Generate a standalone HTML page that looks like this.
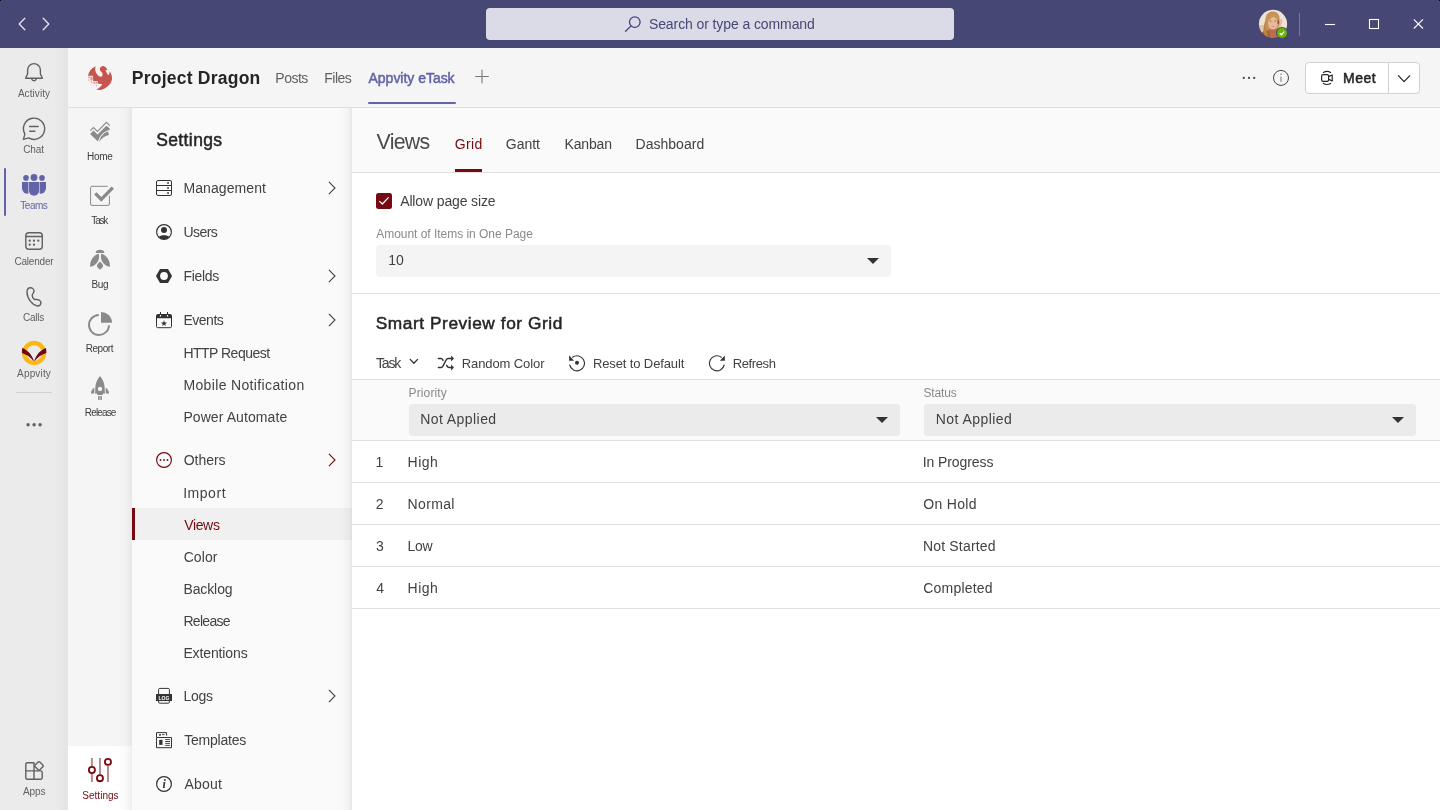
<!DOCTYPE html>
<html lang="en">
<head>
<meta charset="utf-8">
<title>Project Dragon - Appvity eTask - Settings - Views</title>
<style>
html,body{margin:0;padding:0;}
body{width:1440px;height:810px;overflow:hidden;position:relative;background:#fff;font-family:"Liberation Sans",sans-serif;}
.a{position:absolute;}
.t{position:absolute;white-space:nowrap;line-height:1;}
svg{position:absolute;overflow:visible;}
#titlebar{left:0;top:0;width:1440px;height:48px;background:#464775;}
#search{left:486px;top:8px;width:468px;height:32px;border-radius:4px;background:#dbdbe7;}
#rail{left:0;top:48px;width:68px;height:762px;background:linear-gradient(90deg,#ebebeb 0,#ebebeb 54px,#e4e4e4 68px);}
#header{left:68px;top:48px;width:1372px;height:59px;background:#f5f5f5;border-bottom:1px solid #dedede;}
#appnav{left:68px;top:108px;width:64px;height:702px;background:linear-gradient(90deg,#f5f5f5 0,#f5f5f5 50px,#f2f2f2 57px,#ececec 62px,#e5e5e5 64px);}
#appnav-active{left:68px;top:746px;width:64px;height:64px;background:linear-gradient(90deg,#fff 0,#fff 50px,#fbfbfb 57px,#f4f4f4 62px,#ececec 64px);}
#panel{left:132px;top:108px;width:220px;height:702px;background:linear-gradient(90deg,#fafafa 0,#fafafa 205px,#f7f7f7 212px,#f1f1f1 217px,#e7e7e7 220px);}
#hl{left:132px;top:508px;width:220px;height:32px;background:linear-gradient(90deg,#f0f0f0 0,#f0f0f0 205px,#ededed 212px,#e8e8e8 217px,#dfdfdf 220px);}
#hlbar{left:132px;top:508px;width:3px;height:32px;background:#750b12;}
#content{left:352px;top:108px;width:1088px;height:702px;background:#fff;}
#viewsbar{left:352px;top:108px;width:1088px;height:64px;background:#fafafa;border-bottom:1px solid #e0e0e0;}
.hr{height:1px;background:#e0e0e0;left:352px;width:1088px;}
.dd{border-radius:4px;height:32px;}
.tri{width:0;height:0;border-left:6px solid transparent;border-right:6px solid transparent;border-top:6.5px solid #333;}
</style>
</head>
<body>
<div id="titlebar" class="a"></div>
<div id="search" class="a"></div>
<div class="a" style="left:0;top:0;width:1px;height:1px;background:#000;"></div><div class="a" style="left:1439px;top:0;width:1px;height:1px;background:#000;"></div>
<div id="rail" class="a"></div>
<div id="header" class="a"></div>
<div id="appnav" class="a"></div>
<div id="appnav-active" class="a"></div>
<div id="panel" class="a"></div>
<div id="hl" class="a"></div>
<div id="hlbar" class="a"></div>
<div id="content" class="a"></div>
<div id="viewsbar" class="a"></div>

<!-- rail active marker + divider -->
<div class="a" style="left:4px;top:168px;width:2px;height:48px;background:#6264a7;border-radius:1px;"></div>
<div class="a" style="left:16px;top:392px;width:36px;height:1px;background:#d1d1d1;"></div>

<!-- header tab underline -->
<div class="a" style="left:368px;top:102px;width:88px;height:2px;background:#6264a7;border-radius:1px;"></div>
<!-- Meet button -->
<div class="a" style="left:1305px;top:62px;width:113px;height:30px;background:#fff;border:1px solid #d1d1d1;border-radius:4px;"></div>
<div class="a" style="left:1388px;top:63px;width:1px;height:30px;background:#d1d1d1;"></div>

<!-- content: Grid tab underline -->
<div class="a" style="left:455px;top:169px;width:27px;height:3px;background:#750b12;"></div>
<!-- checkbox -->
<div class="a" style="left:376px;top:193px;width:16px;height:16px;background:#750b12;border-radius:2.5px;"></div>
<svg style="left:376px;top:193px" width="16" height="16" viewBox="0 0 16 16"><path d="M3.4 8.1 L6.3 11 L12.6 4.4" fill="none" stroke="#fff" stroke-width="1.3"/></svg>
<!-- page size dropdown -->
<div class="a dd" style="left:376px;top:245px;width:515px;background:#f4f4f4;"></div>
<div class="a tri" style="left:867px;top:258px;"></div>
<div class="a hr" style="top:293px;"></div>
<!-- toolbar bottom, table header -->
<div class="a hr" style="top:379px;"></div>
<div class="a" style="left:352px;top:380px;width:1088px;height:60px;background:#fafafa;"></div>
<div class="a dd" style="left:409px;top:404px;width:491px;background:#ebebeb;"></div>
<div class="a tri" style="left:876px;top:417px;"></div>
<div class="a dd" style="left:924px;top:404px;width:492px;background:#ebebeb;"></div>
<div class="a tri" style="left:1392px;top:417px;"></div>
<div class="a hr" style="top:440px;"></div>
<div class="a hr" style="top:482px;"></div>
<div class="a hr" style="top:524px;"></div>
<div class="a hr" style="top:566px;"></div>
<div class="a hr" style="top:608px;"></div>

<div id="fg" class="a" style="left:0;top:0;width:1440px;height:810px;will-change:transform;">
<!--ICONS-START-->
<svg style="left:0;top:0" width="1440" height="810" viewBox="0 0 1440 810" fill="none">
<defs>
<clipPath id="avc"><circle cx="1273" cy="23.9" r="14.1"/></clipPath>
<filter id="avb" x="-10%" y="-10%" width="120%" height="120%"><feGaussianBlur stdDeviation="0.55"/></filter>
<clipPath id="lgc"><circle cx="100" cy="77.8" r="12.3"/></clipPath>
</defs>

<!-- ===== title bar ===== -->
<g stroke="#e4e4ee" stroke-width="1.3" stroke-linecap="round" stroke-linejoin="round">
<path d="M24.8 18.3 L19.2 24 L24.8 29.7"/>
<path d="M43.2 18.3 L48.8 24 L43.2 29.7"/>
</g>
<!-- search icon -->
<g stroke="#40417a" stroke-width="1.3" stroke-linecap="round">
<circle cx="634.8" cy="22.1" r="5.3"/>
<path d="M630.8 26.1 L625.6 31.2"/>
</g>
<!-- avatar -->
<g clip-path="url(#avc)"><g filter="url(#avb)">
<rect x="1256" y="7" width="34" height="34" fill="#eee4d6"/>
<rect x="1256" y="25" width="12" height="16" fill="#dbc9ab"/>
<rect x="1279" y="27" width="10" height="6" fill="#e2d3bd"/>
<path d="M1264 39 C1262 32 1264 25 1265.3 20 C1265.8 13.5 1269.5 11.3 1273 11.6 C1277.5 11.8 1280 15 1279.6 20 L1279.4 26 L1277 32 L1276 39 Z" fill="#c79256"/>
<path d="M1260.5 34 C1263 31 1266 30 1269 30.5 L1271.5 29 L1276.5 29.2 L1277 39 L1262 39 Z" fill="#a95c3b"/>
<path d="M1269.2 29 L1276.6 29 L1276.8 38.5 L1270 38.5 Z" fill="#b96e4e"/>
<ellipse cx="1273" cy="23.2" rx="4.9" ry="6.4" fill="#e8b999"/>
<path d="M1267.8 20.5 C1268.5 15 1272.5 13 1276 14.8 C1278 16 1278.8 18.5 1279 22 C1277 19.5 1275.3 17.5 1274 16 C1272 18 1270 19.5 1267.8 20.5 Z" fill="#c99558"/>
<path d="M1266.2 20 C1265.2 26 1266.2 31 1268.4 37 L1265 37 C1263 31 1264 24.5 1266.2 20 Z" fill="#bf8345"/>
<path d="M1279.6 19.5 C1281.2 18 1283 19.5 1282.2 22.5 L1280.4 28 L1278.6 27.4 Z" fill="#e6bba8"/>
<ellipse cx="1278.4" cy="22.3" rx=".9" ry="2.3" fill="#8d4f2e"/>
<rect x="1269.6" y="20.6" width="1.8" height=".9" fill="#8c6a58"/><rect x="1274.4" y="20.6" width="1.8" height=".9" fill="#8c6a58"/>
<rect x="1271.3" y="26" width="3.4" height="1" fill="#d9968a"/>
</g></g>
<circle cx="1282" cy="33" r="6" fill="#464775"/>
<circle cx="1282" cy="33" r="5" fill="#6bb700"/>
<path d="M1279.8 33.2 L1281.4 34.8 L1284.3 31.6" stroke="#fff" stroke-width="1.3"/>
<rect x="1299" y="13" width="1" height="23" fill="#7677a0"/>
<!-- window controls -->
<g stroke="#fff" stroke-width="1.1">
<path d="M1325 24.5 H1335"/>
<rect x="1369.5" y="19.5" width="9" height="9"/>
<path d="M1413.8 19.3 L1423 28.5 M1423 19.3 L1413.8 28.5"/>
</g>

<!-- ===== left rail ===== -->
<g stroke="#616161" stroke-width="1.4" stroke-linejoin="round" stroke-linecap="round">
<!-- bell -->
<path d="M27.6 70 A6.4 6.4 0 0 1 40.4 70 V74 L42.4 78.2 H25.6 L27.6 74 Z"/>
<path d="M31.6 78.9 A2.5 2.5 0 0 0 36.4 78.9"/>
<!-- chat -->
<path d="M24.9 134.1 A10.6 10.6 0 1 1 28.7 137.9 L23.4 139.4 Z"/>
<path d="M29.7 126.5 H38.2 M29.7 131.3 H34.9"/>
<!-- calendar -->
<rect x="25.8" y="232.7" width="16.5" height="16.5" rx="3"/>
<path d="M25.8 236.5 H42.3"/>
<!-- calls -->
<path d="M27 292 C27 289.5 28.5 287.8 30.6 287.8 C32.5 287.8 34 289.5 34 291.3 C34 293 32.2 293.8 32.2 295.2 C32.2 297 33 298.6 34.3 299.3 C35.5 299.9 36.5 299.2 38 299.6 C39.8 300.2 41 301.6 40.9 303 C40.8 304.8 39.2 306 37.4 306 C33 305.5 27 299 27 292 Z"/>
<!-- apps -->
<path d="M27.3 762.8 H34 V779.2 H27.3 A1.5 1.5 0 0 1 25.8 777.7 V764.3 A1.5 1.5 0 0 1 27.3 762.8 Z"/>
<path d="M25.8 770.9 H40.7 A1.5 1.5 0 0 1 42.2 772.4 V777.7 A1.5 1.5 0 0 1 40.7 779.2 H34"/>
<rect x="-3.3" y="-3.3" width="6.6" height="6.6" rx="1.2" transform="translate(39 765.9) rotate(45)"/>
</g>
<g fill="#616161">
<circle cx="29.7" cy="240.7" r="1.15"/><circle cx="34" cy="240.7" r="1.15"/><circle cx="38.3" cy="240.7" r="1.15"/>
<circle cx="29.7" cy="244.7" r="1.15"/><circle cx="34" cy="244.7" r="1.15"/>
<circle cx="28.1" cy="424.8" r="1.7"/><circle cx="34.1" cy="424.8" r="1.7"/><circle cx="40.1" cy="424.8" r="1.7"/>
</g>
<!-- teams -->
<g fill="#6264a7">
<circle cx="34" cy="177.5" r="3.4"/><circle cx="26" cy="177.9" r="2.8"/><circle cx="42" cy="177.9" r="2.8"/>
<path d="M29 182 H39 V190.8 A5 5 0 0 1 29 190.8 Z"/>
<path d="M22 182 H28 V193.8 A6 5.6 0 0 1 22 188.2 Z"/>
<path d="M40 182 H46 V188.2 A6 5.6 0 0 1 40 193.8 Z"/>
<rect x="28" y="182" width="1" height="11.5" fill="#b0b1d6"/><rect x="39" y="182" width="1" height="11.5" fill="#b0b1d6"/>
</g>
<!-- appvity -->
<circle cx="34.1" cy="353" r="9.9" stroke="#fdb714" stroke-width="4.5"/>
<g fill="#6e0914">
<path d="M22.3 348.1 C27.5 350.2 31.5 354 33.9 360.8 L33.3 360.8 C30.8 357.5 27 354.6 21.9 353 C21.8 351.3 22 349.5 22.3 348.1 Z"/>
<path d="M45.9 348.1 C40.7 350.2 36.7 354 34.3 360.8 L34.9 360.8 C37.4 357.5 41.2 354.6 46.3 353 C46.4 351.3 46.2 349.5 45.9 348.1 Z"/>
</g>

<!-- ===== header ===== -->
<!-- logo -->
<g clip-path="url(#lgc)">
<circle cx="100" cy="77.8" r="12.3" fill="#f8f1f0"/>
<path fill="#c6544f" transform="translate(84 62)" d="M11.9 4 C10.6 6.5 11 9.5 13 12.3 C14.2 14 15.6 14.9 16.8 14.8 C18.3 14.6 19 13.2 18.5 11.5 C18 10 16.6 9.5 16.2 8.5 C15.6 7 15.8 5.8 16.8 5 C17.8 4.1 19.6 3.6 21 4.4 C22.4 5.2 22.6 6.8 23.6 8.3 L21.4 8 C21.8 9.2 22.3 10.3 23 11.3 C23.6 12.2 24.2 13 24.7 13.2 C25.3 12 25.6 10.8 25.7 9.5 C27.4 11.5 28.2 14 28 17 C27.7 20 26 23 22.1 25.5 C20 26.9 18 27.7 16 27.9 C14.5 28 13 27.8 11.9 27.3 C13.5 27 15 26.2 16.2 25 C17.2 24 17.9 23 18.2 22 L13.8 21.7 V19 H9.1 V13.8 H4 C4.2 11.8 4.8 10.4 5.6 9.2 C7.2 6.6 9.4 4.8 11.9 4 Z"/>
<g fill="#c6544f" transform="translate(84 62)" opacity=".55">
<rect x="4.2" y="14.6" width="1.6" height="1.6"/><rect x="6.4" y="14.6" width="2.2" height="3.4"/><rect x="4.2" y="17.4" width="1" height="1.4"/>
<rect x="6.4" y="18.6" width="1.6" height="1"/><rect x="9.4" y="19.6" width="1.6" height="2"/><rect x="11.4" y="19.6" width="2" height="2"/>
<rect x="7.4" y="20.2" width="1.2" height="1"/><rect x="12" y="23" width="1" height="1"/>
</g>
</g>
<!-- plus -->
<path d="M475.2 76.5 H488.8 M482 69.7 V83.3" stroke="#767676" stroke-width="1.1"/>
<!-- more dots, info -->
<g fill="#424242"><circle cx="1243.8" cy="77.9" r="1.1"/><circle cx="1249" cy="77.9" r="1.1"/><circle cx="1254.2" cy="77.9" r="1.1"/></g>
<circle cx="1281" cy="77.9" r="7.5" stroke="#424242" stroke-width="1"/>
<path d="M1281 76.5 V81.8" stroke="#8a8a8a" stroke-width="1.2"/><circle cx="1281" cy="74.2" r=".8" fill="#8a8a8a"/>
<!-- meet -->
<g stroke="#252525" stroke-width="1.2" stroke-linejoin="round" stroke-linecap="round">
<rect x="1321.6" y="74.6" width="7" height="6.8" rx="1.6"/>
<path d="M1328.8 76.4 L1332.2 75 V81 L1328.8 79.4"/>
<path d="M1323.4 72.4 Q1327 70.4 1330.6 72.4 M1323.4 83.5 Q1327 85.5 1330.6 83.5"/>
<path d="M1398.4 75.6 L1404.1 81.6 L1409.8 75.6"/>
</g>

<!-- ===== app nav ===== -->
<g fill="#8a8a8a">
<!-- home (etask logo) -->
<path d="M90.3 130.7 L93.5 127.5 L97.5 131.4 L106.4 122.3 L109.8 125.6" fill="none" stroke="#8a8a8a" stroke-width="1.1"/>
<path d="M90.1 134.1 L93.5 130.6 L97.5 134.4 L106.4 125.7 L109.7 128.4 L109.6 130 C104 131.2 100 135 97.9 141.5 Z"/>
<path d="M99.2 141.9 C100.5 136 104 132.8 108 131.6 L109 135 C104.5 136 101.5 138.5 99.2 141.9 Z"/>
<!-- task -->
<path d="M107.8 186.3 H92 A1.4 1.4 0 0 0 90.6 187.7 V204 A1.4 1.4 0 0 0 92 205.4 H108 A1.4 1.4 0 0 0 109.4 204 V195.7" fill="none" stroke="#8a8a8a" stroke-width="1"/>
<path d="M95.3 193.3 L101.3 199.4 L112.8 187.6" fill="none" stroke="#8a8a8a" stroke-width="3.3"/>
<!-- bug -->
<path d="M95.7 252.9 A4.3 3.2 0 0 1 104.3 252.9 Z"/>
<path d="M98.7 253.8 C94.5 254.3 89.3 260.5 90.2 266.8 C95.5 266.6 100.6 260 98.7 253.8 Z"/>
<path d="M101.3 253.8 C105.5 254.3 110.7 260.5 109.8 266.8 C104.5 266.6 99.4 260 101.3 253.8 Z"/>
<path d="M100 261.4 C101.6 263 103 264.4 103.1 265.8 C102.8 267.5 101.4 268.6 100 269.8 C98.6 268.6 97.2 267.5 96.9 265.8 C97 264.4 98.4 263 100 261.4 Z"/>
<!-- report -->
<path d="M98.8 315 A10 10 0 1 0 109 325.2" fill="none" stroke="#8a8a8a" stroke-width="1.9"/>
<path d="M101 322.7 V312 A10.9 10.9 0 0 1 112 322.7 Z"/>
<!-- release -->
<path d="M100 376 C97 379.5 95.6 383.5 95.4 387 L95.1 393.6 H97 L97.4 394.9 H102.6 L103 393.6 H104.9 L104.6 387 C104.4 383.5 103 379.5 100 376 Z"/>
<path d="M94.4 387.4 C92.2 388.8 91 391 91 393.6 H94.2 Z"/>
<path d="M105.6 387.4 C107.8 388.8 109 391 109 393.6 H105.8 Z"/>
<rect x="98.1" y="396" width="1.6" height="3.9"/><rect x="100.3" y="396" width="1.6" height="3.9"/>
</g>
<circle cx="100" cy="388.9" r="2.2" fill="#f5f5f5"/>
<!-- settings (active) -->
<g stroke="#750b12" stroke-width="1.9" opacity=".5">
<path d="M91.9 758.1 V766.5 M91.9 773.5 V781.9 M99.95 758.1 V774.7 M107.95 765.4 V781.9"/>
</g>
<g stroke="#750b12" stroke-width="1.8" fill="#fff">
<circle cx="91.9" cy="770" r="3.05"/><circle cx="99.95" cy="778.2" r="3.05"/><circle cx="107.95" cy="761.9" r="3.05"/>
</g>

<!-- ===== settings panel ===== -->
<g stroke="#333" stroke-width="1" stroke-linejoin="round">
<!-- management -->
<rect x="156.5" y="180.5" width="15" height="15" rx="1.5"/>
<path d="M156.5 185.5 H171.5 M156.5 190.5 H171.5"/>
<!-- users -->
<circle cx="164" cy="232" r="7.4" stroke-width="1.15"/>
<!-- events -->
<rect x="156.5" y="314.5" width="15" height="13.2" rx="1.2"/>
<path d="M160.5 312 V314 M167.5 312 V314"/>
<!-- logs -->
<path d="M158.6 694 V689.6 A1.2 1.2 0 0 1 159.8 688.4 H168.2 A1.2 1.2 0 0 1 169.4 689.6 V694"/>
<path d="M158.6 701 V702 A1.2 1.2 0 0 0 159.8 703.2 H168.2 A1.2 1.2 0 0 0 169.4 702 V701"/>
<!-- templates -->
<rect x="156.5" y="737.5" width="15" height="10.2"/>
<path d="M156.5 737 V732.6 H166.6 V735.6"/>
<path d="M165.2 739.6 H170 M165.2 741.5 H170 M165.2 743.4 H170 M165.2 745.4 H170" stroke-width=".9"/>
<!-- about -->
<circle cx="164" cy="784" r="7.4" stroke-width="1.2"/>
</g>
<g fill="#333">
<rect x="167.2" y="182.2" width="1.7" height="1.6"/><rect x="167.2" y="187.2" width="1.7" height="1.6"/><rect x="167.2" y="192.2" width="1.7" height="1.6"/>
<circle cx="164" cy="230" r="3"/>
<path d="M158.7 236.9 C160.5 234.8 167.5 234.8 169.3 236.9 A7.2 7.2 0 0 1 158.7 236.9 Z"/>
<!-- fields hex nut -->
<path fill-rule="evenodd" d="M156 276 L160 269 H168 L172 276 L168 283 H160 Z M164 272.1 A3.9 3.9 0 1 0 164 279.9 A3.9 3.9 0 1 0 164 272.1 Z"/>
<!-- events header + star -->
<path d="M156.5 318.2 V315.7 A1.2 1.2 0 0 1 157.7 314.5 H159.9 V316.6 H161.1 V314.5 H166.9 V316.6 H168.1 V314.5 H170.3 A1.2 1.2 0 0 1 171.5 315.7 V318.2 Z"/>
<path d="M164 320.2 L164.8 322.4 L167.1 322.5 L165.3 323.9 L165.9 326.1 L164 324.8 L162.1 326.1 L162.7 323.9 L160.9 322.5 L163.2 322.4 Z"/>
<!-- logs band -->
<rect x="156" y="694" width="16" height="7"/>
<!-- templates bits -->
<rect x="159.2" y="739.8" width="3.3" height="5.1"/>
<rect x="159" y="734.2" width="2" height="1.4"/><rect x="162" y="734.2" width="2.6" height=".9"/>
</g>
<text x="164" y="699.6" font-family="Liberation Sans, sans-serif" font-size="5.4" font-weight="700" fill="#fff" text-anchor="middle" textLength="11" lengthAdjust="spacingAndGlyphs">LOG</text>
<text x="164.2" y="788.3" font-family="Liberation Serif, serif" font-size="12" font-style="italic" font-weight="700" fill="#333" text-anchor="middle">i</text>
<!-- others (maroon) -->
<circle cx="164" cy="460" r="7.4" stroke="#750b12" stroke-width="1.15"/>
<g fill="#750b12"><circle cx="160.5" cy="460" r=".9"/><circle cx="164" cy="460" r=".9"/><circle cx="167.5" cy="460" r=".9"/></g>
<!-- chevrons -->
<g stroke="#424242" stroke-width="1.1" stroke-linejoin="miter">
<path d="M328.9 181.9 L335 188 L328.9 194.1"/>
<path d="M328.9 269.9 L335 276 L328.9 282.1"/>
<path d="M328.9 313.9 L335 320 L328.9 326.1"/>
<path d="M328.9 689.9 L335 696 L328.9 702.1"/>
</g>
<path d="M328.9 453.9 L335 460 L328.9 466.1" stroke="#750b12" stroke-width="1.1"/>

<!-- ===== toolbar ===== -->
<g stroke="#333" stroke-linecap="round" stroke-linejoin="round">
<path d="M410.2 359.4 L413.9 363.3 L417.6 359.4" stroke-width="1.3"/>
<!-- shuffle -->
<g stroke-width="1.5">
<path d="M438.4 358.4 H441 Q442.6 358.4 443 360.4"/>
<path d="M438.4 367.4 H441.2 Q442.2 367.4 442.8 366.4 L446.4 359.5 Q447 358.4 448.2 358.4 H451.5"/>
<path d="M446.6 365.4 Q447.4 367.4 449 367.4 H451.5"/>
</g>
<!-- reset -->
<path d="M572.6 357.2 A7.5 7.5 0 1 1 569.7 365" stroke-width="1.15"/>
<!-- refresh -->
<path d="M721.3 357.2 A7.5 7.5 0 1 0 724.2 365" stroke-width="1.15"/>
</g>
<g fill="#333">
<path d="M451.1 355.4 L454 358.4 L451.1 361.4 Z"/><path d="M451.1 364.4 L454 367.4 L451.1 370.4 Z"/>
<path d="M569.1 355.3 V360.8 H574 Z"/>
<circle cx="577" cy="362.8" r="2"/>
<path d="M724.8 355.5 V360.8 H719.9 Z"/>
</g>
</svg>
<!--ICONS-END-->

<span class="t" style="left:648.95px;top:17.00px;font-size:14px;color:#464775;letter-spacing:-0.096px;">Search or type a command</span>
<span class="t" style="left:17.90px;top:89.00px;font-size:10px;color:#616161;letter-spacing:0.064px;">Activity</span>
<span class="t" style="left:23.20px;top:145.00px;font-size:10px;color:#616161;letter-spacing:-0.067px;">Chat</span>
<span class="t" style="left:20.35px;top:201.00px;font-size:10px;color:#6264a7;letter-spacing:-0.488px;">Teams</span>
<span class="t" style="left:14.40px;top:257.00px;font-size:10px;color:#616161;letter-spacing:-0.200px;">Calender</span>
<span class="t" style="left:23.10px;top:313.00px;font-size:10px;color:#616161;letter-spacing:-0.275px;">Calls</span>
<span class="t" style="left:17.10px;top:369.00px;font-size:10px;color:#616161;letter-spacing:0.158px;">Appvity</span>
<span class="t" style="left:22.90px;top:787.00px;font-size:10px;color:#616161;letter-spacing:-0.067px;">Apps</span>
<span class="t" style="left:87.05px;top:152.00px;font-size:10px;color:#3d3d3d;letter-spacing:-0.300px;">Home</span>
<span class="t" style="left:91.35px;top:216.00px;font-size:10px;color:#3d3d3d;letter-spacing:-1.217px;">Task</span>
<span class="t" style="left:91.55px;top:280.00px;font-size:10px;color:#3d3d3d;letter-spacing:-0.350px;">Bug</span>
<span class="t" style="left:85.65px;top:344.00px;font-size:10px;color:#3d3d3d;letter-spacing:-0.430px;">Report</span>
<span class="t" style="left:84.85px;top:408.00px;font-size:10px;color:#3d3d3d;letter-spacing:-0.850px;">Release</span>
<span class="t" style="left:82.30px;top:791.00px;font-size:10px;color:#750b12;letter-spacing:0.021px;">Settings</span>
<span class="t" style="left:131.75px;top:70.00px;font-size:17.5px;color:#252525;font-weight:700;letter-spacing:0.235px;">Project Dragon</span>
<span class="t" style="left:275.30px;top:71.00px;font-size:14px;color:#616161;letter-spacing:-0.500px;">Posts</span>
<span class="t" style="left:324.30px;top:71.00px;font-size:14px;color:#616161;letter-spacing:-0.500px;">Files</span>
<span class="t" style="left:368.55px;top:71.00px;font-size:14px;color:#6264a7;-webkit-text-stroke:0.5px #6264a7;letter-spacing:-0.025px;">Appvity eTask</span>
<span class="t" style="left:1343.05px;top:71.00px;font-size:14px;color:#252525;-webkit-text-stroke:0.5px #252525;letter-spacing:0.500px;">Meet</span>
<span class="t" style="left:156.20px;top:132.00px;font-size:17.5px;color:#252525;-webkit-text-stroke:0.5px #252525;letter-spacing:0.386px;">Settings</span>
<span class="t" style="left:183.40px;top:181.00px;font-size:14px;color:#424242;letter-spacing:0.094px;">Management</span>
<span class="t" style="left:183.40px;top:225.00px;font-size:14px;color:#424242;letter-spacing:-0.525px;">Users</span>
<span class="t" style="left:183.40px;top:269.00px;font-size:14px;color:#424242;letter-spacing:-0.300px;">Fields</span>
<span class="t" style="left:183.40px;top:313.00px;font-size:14px;color:#424242;letter-spacing:-0.470px;">Events</span>
<span class="t" style="left:183.40px;top:346.00px;font-size:14px;color:#424242;letter-spacing:-0.514px;">HTTP Request</span>
<span class="t" style="left:183.40px;top:378.00px;font-size:14px;color:#424242;letter-spacing:0.356px;">Mobile Notification</span>
<span class="t" style="left:183.40px;top:410.00px;font-size:14px;color:#424242;letter-spacing:0.081px;">Power Automate</span>
<span class="t" style="left:183.65px;top:453.00px;font-size:14px;color:#424242;letter-spacing:-0.010px;">Others</span>
<span class="t" style="left:183.15px;top:486.00px;font-size:14px;color:#424242;letter-spacing:0.540px;">Import</span>
<span class="t" style="left:184.15px;top:518.00px;font-size:14px;color:#750b12;letter-spacing:-0.337px;">Views</span>
<span class="t" style="left:183.65px;top:550.00px;font-size:14px;color:#424242;letter-spacing:0.100px;">Color</span>
<span class="t" style="left:183.40px;top:582.00px;font-size:14px;color:#424242;letter-spacing:-0.100px;">Backlog</span>
<span class="t" style="left:183.40px;top:614.00px;font-size:14px;color:#424242;letter-spacing:-0.692px;">Release</span>
<span class="t" style="left:183.40px;top:646.00px;font-size:14px;color:#424242;letter-spacing:-0.122px;">Extentions</span>
<span class="t" style="left:183.40px;top:689.00px;font-size:14px;color:#424242;letter-spacing:-0.267px;">Logs</span>
<span class="t" style="left:184.15px;top:733.00px;font-size:14px;color:#424242;letter-spacing:-0.200px;">Templates</span>
<span class="t" style="left:184.40px;top:777.00px;font-size:14px;color:#424242;letter-spacing:0.200px;">About</span>
<span class="t" style="left:376.50px;top:132.00px;font-size:21.3px;color:#4a4a4a;letter-spacing:-0.688px;">Views</span>
<span class="t" style="left:454.75px;top:137.00px;font-size:14px;color:#750b12;letter-spacing:0.333px;">Grid</span>
<span class="t" style="left:505.75px;top:137.00px;font-size:14px;color:#424242;">Gantt</span>
<span class="t" style="left:564.50px;top:137.00px;font-size:14px;color:#424242;letter-spacing:-0.150px;">Kanban</span>
<span class="t" style="left:635.50px;top:137.00px;font-size:14px;color:#424242;letter-spacing:0.031px;">Dashboard</span>
<span class="t" style="left:400.20px;top:194.00px;font-size:14px;color:#424242;letter-spacing:-0.132px;">Allow page size</span>
<span class="t" style="left:376.20px;top:228.00px;font-size:12px;color:#8a8a8a;letter-spacing:-0.027px;">Amount of Items in One Page</span>
<span class="t" style="left:388.20px;top:253.00px;font-size:14px;color:#424242;letter-spacing:0.100px;">10</span>
<span class="t" style="left:375.70px;top:315.00px;font-size:17.3px;color:#252525;-webkit-text-stroke:0.5px #252525;letter-spacing:0.567px;">Smart Preview for Grid</span>
<span class="t" style="left:375.95px;top:356.00px;font-size:14px;color:#424242;letter-spacing:-1.167px;">Task</span>
<span class="t" style="left:461.80px;top:357.00px;font-size:13px;color:#424242;letter-spacing:-0.105px;">Random Color</span>
<span class="t" style="left:592.90px;top:357.00px;font-size:13px;color:#424242;letter-spacing:-0.117px;">Reset to Default</span>
<span class="t" style="left:732.75px;top:357.00px;font-size:13px;color:#424242;letter-spacing:-0.400px;">Refresh</span>
<span class="t" style="left:408.50px;top:387.00px;font-size:12px;color:#8a8a8a;letter-spacing:0.136px;">Priority</span>
<span class="t" style="left:923.50px;top:387.00px;font-size:12px;color:#8a8a8a;letter-spacing:-0.160px;">Status</span>
<span class="t" style="left:420.20px;top:412.00px;font-size:14px;color:#424242;letter-spacing:0.435px;">Not Applied</span>
<span class="t" style="left:935.80px;top:412.00px;font-size:14px;color:#424242;letter-spacing:0.445px;">Not Applied</span>
<span class="t" style="left:375.60px;top:455.00px;font-size:14px;color:#424242;">1</span>
<span class="t" style="left:407.60px;top:455.00px;font-size:14px;color:#424242;letter-spacing:0.500px;">High</span>
<span class="t" style="left:922.75px;top:455.00px;font-size:14px;color:#424242;letter-spacing:-0.095px;">In Progress</span>
<span class="t" style="left:375.85px;top:497.00px;font-size:14px;color:#424242;">2</span>
<span class="t" style="left:407.60px;top:497.00px;font-size:14px;color:#424242;letter-spacing:0.330px;">Normal</span>
<span class="t" style="left:923.25px;top:497.00px;font-size:14px;color:#424242;letter-spacing:0.325px;">On Hold</span>
<span class="t" style="left:376.10px;top:539.00px;font-size:14px;color:#424242;">3</span>
<span class="t" style="left:407.60px;top:539.00px;font-size:14px;color:#424242;letter-spacing:-0.275px;">Low</span>
<span class="t" style="left:923.00px;top:539.00px;font-size:14px;color:#424242;letter-spacing:0.170px;">Not Started</span>
<span class="t" style="left:376.35px;top:581.00px;font-size:14px;color:#424242;">4</span>
<span class="t" style="left:407.60px;top:581.00px;font-size:14px;color:#424242;letter-spacing:0.500px;">High</span>
<span class="t" style="left:923.25px;top:581.00px;font-size:14px;color:#424242;letter-spacing:0.200px;">Completed</span>
</div>
</body>
</html>
